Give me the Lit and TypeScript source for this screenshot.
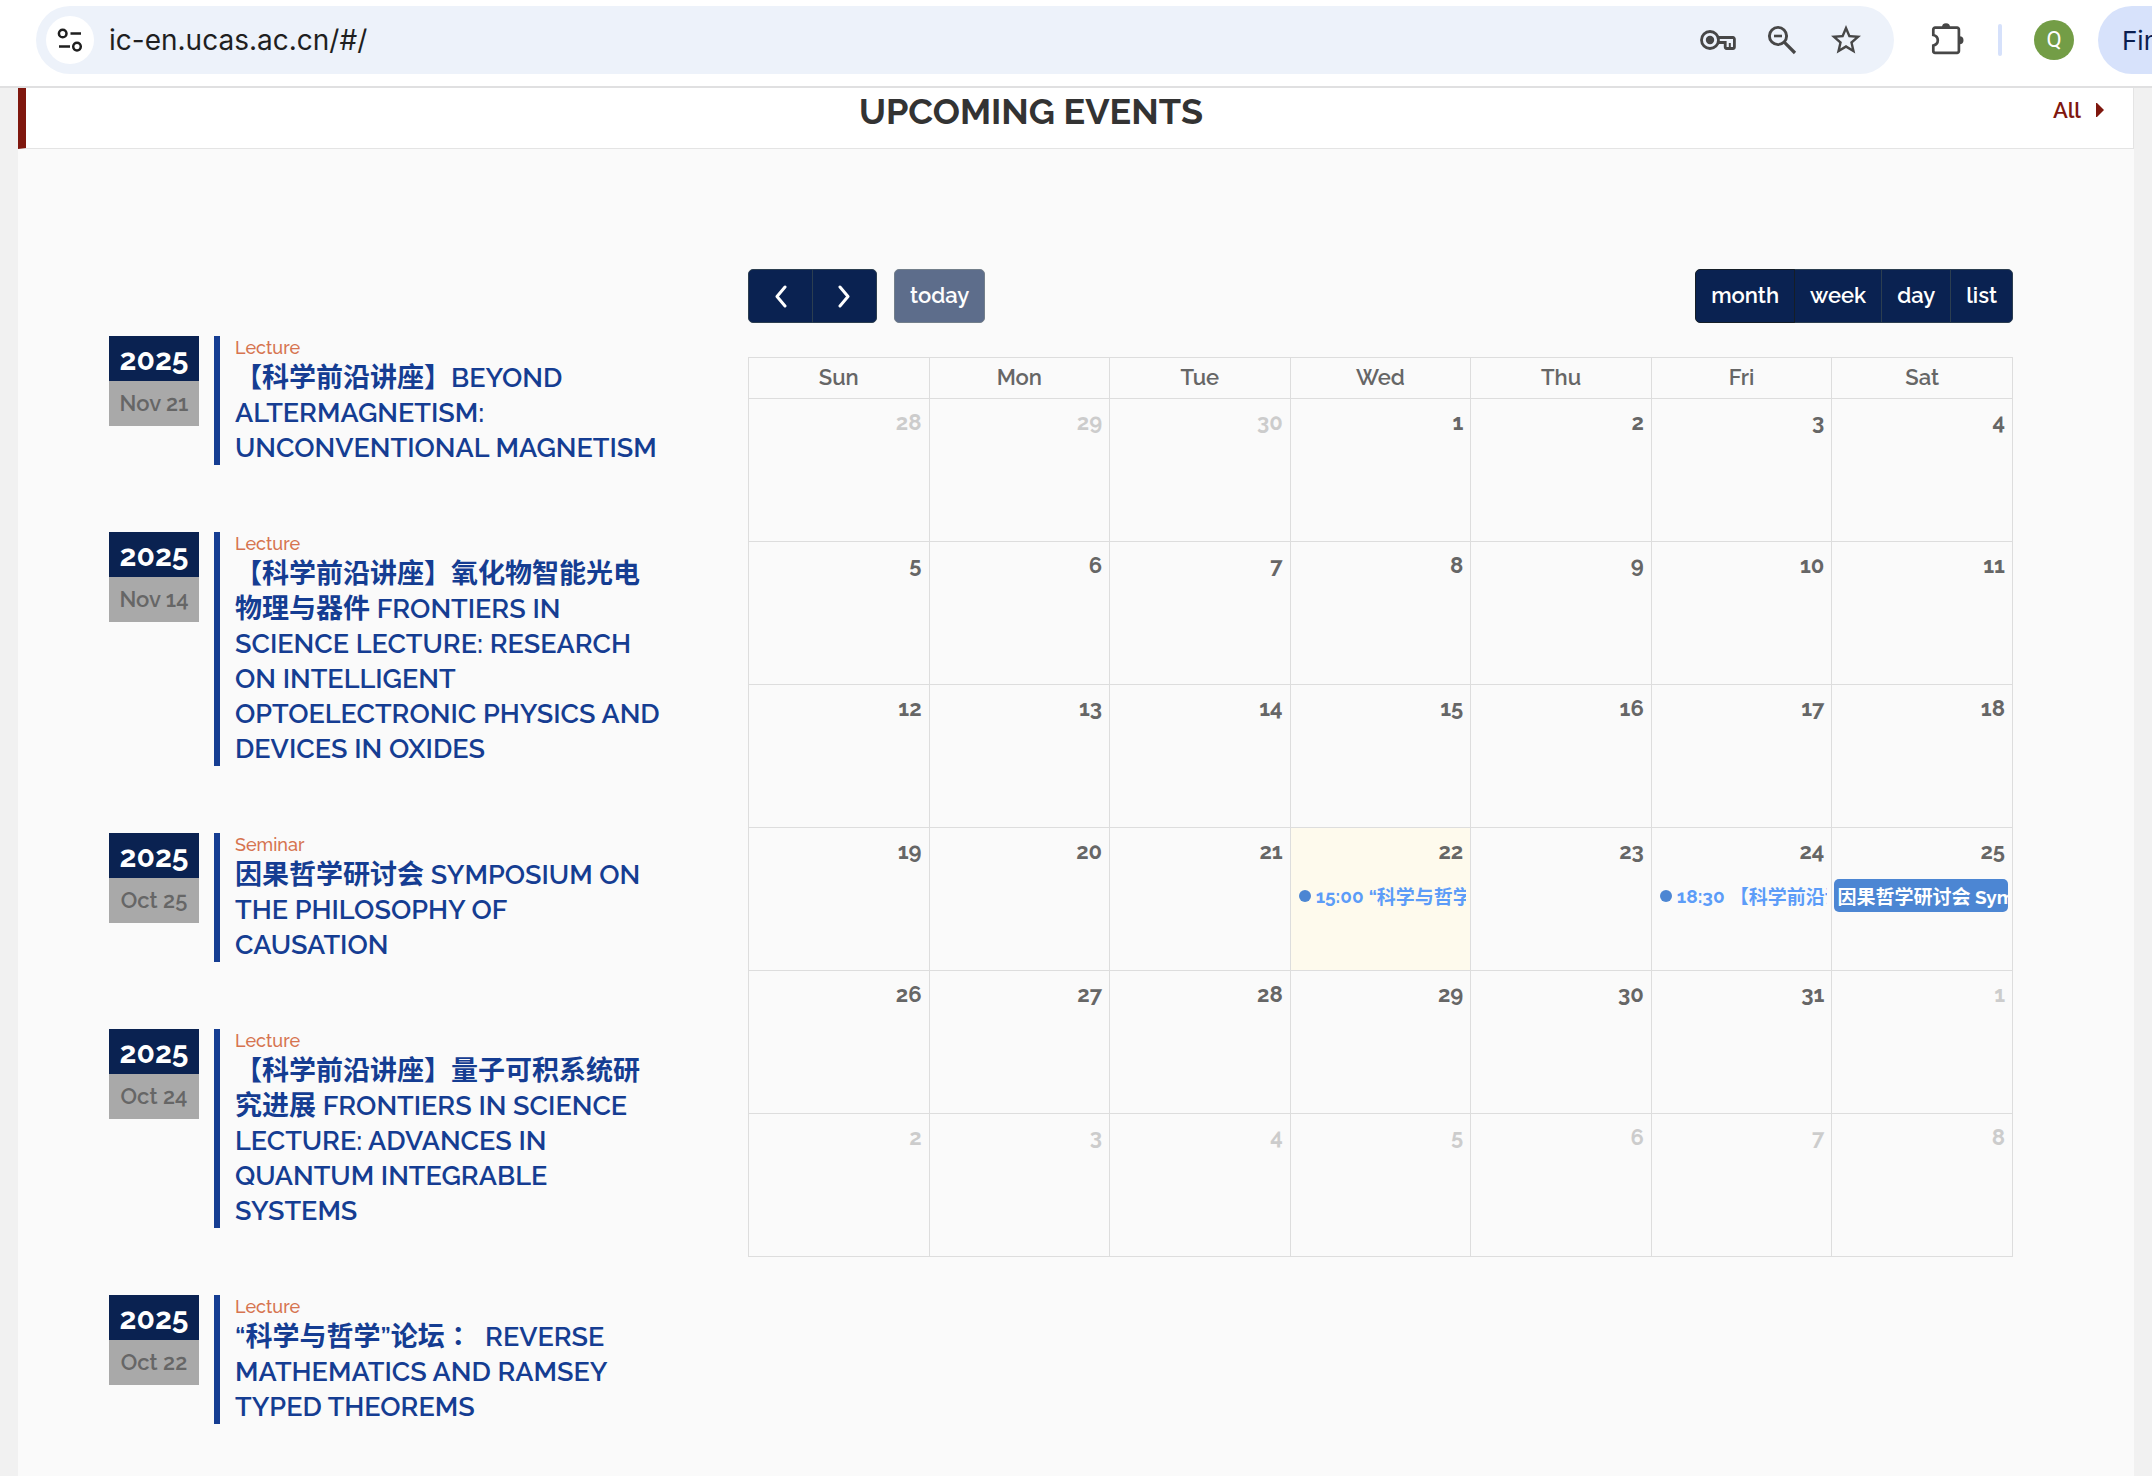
import { LitElement, html, svg, css, nothing } from "lit";
import { customElement } from "lit/decorators.js";
import { classMap } from "lit/directives/class-map.js";

interface EventItem {
  year: string;
  day: string;
  tag: string;
  title: unknown;
}

interface CalendarEvent {
  time?: string;
  title: string;
}

interface Day {
  date: number;
  other: boolean;
  today: boolean;
  event?: CalendarEvent;
}

const EVENTS: EventItem[] = [
  { year: "2025", day: "Nov 21", tag: "Lecture", title: "【科学前沿讲座】BEYOND ALTERMAGNETISM: UNCONVENTIONAL MAGNETISM" },
  {
    year: "2025",
    day: "Nov 14",
    tag: "Lecture",
    title:
      "【科学前沿讲座】氧化物智能光电物理与器件 FRONTIERS IN SCIENCE LECTURE: RESEARCH ON INTELLIGENT OPTOELECTRONIC PHYSICS AND DEVICES IN OXIDES",
  },
  { year: "2025", day: "Oct 25", tag: "Seminar", title: "因果哲学研讨会 SYMPOSIUM ON THE PHILOSOPHY OF CAUSATION" },
  {
    year: "2025",
    day: "Oct 24",
    tag: "Lecture",
    title: "【科学前沿讲座】量子可积系统研究进展 FRONTIERS IN SCIENCE LECTURE: ADVANCES IN QUANTUM INTEGRABLE SYSTEMS",
  },
  {
    year: "2025",
    day: "Oct 22",
    tag: "Lecture",
    title: html`“科学与哲学”论坛<span class="colon">：</span> &nbsp;REVERSE MATHEMATICS AND RAMSEY TYPED THEOREMS`,
  },
];

const CALENDAR_EVENTS: Record<number, CalendarEvent> = {
  22: { time: "15:00", title: "“科学与哲学”论坛" },
  24: { time: "18:30", title: "【科学前沿讲座】" },
  25: { title: "因果哲学研讨会 Symposium" },
};

const WEEKDAYS = ["Sun", "Mon", "Tue", "Wed", "Thu", "Fri", "Sat"];
const TODAY = 22;

/** Six weeks around October 2025, which starts on a Wednesday. */
function buildWeeks(): Day[][] {
  const start = Date.UTC(2025, 8, 28);
  return Array.from({ length: 6 }, (_, week) =>
    Array.from({ length: 7 }, (_, weekday) => {
      const d = new Date(start + (week * 7 + weekday) * 86400000);
      const other = d.getUTCMonth() !== 9;
      const date = d.getUTCDate();
      return { date, other, today: !other && date === TODAY, event: other ? undefined : CALENDAR_EVENTS[date] };
    })
  );
}

@customElement("browser-bar")
export class BrowserBar extends LitElement {
  static styles = css`
    :host {
      display: flex;
      align-items: center;
      box-sizing: border-box;
      height: 88px;
      padding: 6px 0 12px 36px;
      border-bottom: 2px solid #e0e0e1;
      background: #fff;
      overflow: hidden;
      font-family: Inter, "Liberation Sans", sans-serif;
    }
    button {
      display: flex;
      align-items: center;
      justify-content: center;
      flex: none;
      padding: 0;
      border: 0;
      background: none;
      color: #474747;
      font: inherit;
    }
    svg {
      display: block;
    }
    .pill {
      display: flex;
      align-items: center;
      flex: 1;
      min-width: 0;
      height: 68px;
      padding: 0 30px 0 10px;
      box-sizing: border-box;
      border-radius: 34px;
      background: #edf2fa;
    }
    .site {
      width: 48px;
      height: 48px;
      border-radius: 50%;
      background: #fff;
      color: #1f1f1f;
    }
    .address {
      flex: 1;
      min-width: 0;
      height: 48px;
      margin-left: 15px;
      padding: 0;
      border: 0;
      outline: 0;
      background: none;
      color: #1f1f1f;
      font: 400 28px/48px Inter, "Liberation Sans", sans-serif;
    }
    .tools {
      display: flex;
      gap: 28px;
    }
    .puzzle {
      margin-left: 34px;
    }
    .separator {
      flex: none;
      width: 4px;
      height: 32px;
      margin: 0 32px 0 30px;
      border-radius: 2px;
      background: #d6e1fb;
    }
    .avatar {
      width: 40px;
      height: 40px;
      border-radius: 50%;
      background: #739d46;
      color: #fff;
      font: 400 22px/40px Roboto, sans-serif;
    }
    .update {
      justify-content: flex-start;
      width: 54px;
      height: 68px;
      margin-left: 24px;
      padding-left: 24px;
      border-radius: 34px 0 0 34px;
      background: #d7e2fb;
      color: #0a1d4f;
      font-size: 26px;
      overflow: hidden;
    }
  `;

  render() {
    return html`
      <div class="pill">
        <button class="site" aria-label="Site information">
          <svg width="28" height="28" viewBox="0 0 28 28" fill="none" stroke="currentColor" stroke-width="2.5">
            <circle cx="6.7" cy="7.5" r="3.8" />
            <path d="M14.5 7.5H25M3 20.6h11" />
            <circle cx="21" cy="20.6" r="3.8" />
          </svg>
        </button>
        <input class="address" aria-label="Address" value="ic-en.ucas.ac.cn/#/" />
        <div class="tools">
          <button aria-label="Passwords">
            <svg width="36" height="36" viewBox="0 0 36 36" fill="none" stroke="currentColor" stroke-width="2.8">
              <circle cx="10" cy="18" r="8.5" />
              <circle cx="10" cy="18" r="4.2" fill="currentColor" stroke="none" />
              <path d="M18 15.5h15a1.4 1.4 0 0 1 1.4 1.4v8.2a1.4 1.4 0 0 1-1.4 1.4h-6.4a1.4 1.4 0 0 1-1.4-1.4V20.5H18" />
              <path d="M29.8 21v5" stroke-width="2" />
            </svg>
          </button>
          <button aria-label="Zoom">
            <svg width="36" height="36" viewBox="0 0 36 36" fill="none" stroke="currentColor" stroke-width="2.9">
              <circle cx="14" cy="14" r="8.6" />
              <path d="M20.2 20.2 31 31" stroke-width="3.2" />
              <path d="M10 14h8" stroke-width="2.6" />
            </svg>
          </button>
          <button aria-label="Bookmark">
            <svg width="36" height="36" viewBox="0 0 24 24" fill="currentColor">
              <path
                d="M22 9.24l-7.19-.62L12 2 9.19 8.63 2 9.24l5.46 4.73L5.82 21 12 17.27 18.18 21l-1.63-7.03L22 9.24zM12 15.4l-3.76 2.27 1-4.28-3.32-2.88 4.38-.38L12 6.1l1.71 4.04 4.38.38-3.32 2.88 1 4.28L12 15.4z"
              />
            </svg>
          </button>
        </div>
      </div>
      <button class="puzzle" aria-label="Extensions">
        <svg width="40" height="40" viewBox="0 0 40 40">
          <path
            d="M7.1 7.7h22a1.8 1.8 0 0 1 1.8 1.8v21.6a1.8 1.8 0 0 1-1.8 1.8H7.1a1.8 1.8 0 0 1-1.8-1.8V25.500c6-1.500 6-9 0-10.500v-5.500a1.800 1.800 0 0 1 1.800-1.800z"
            fill="none"
            stroke="#474747"
            stroke-width="2.700"
          />
          <path d="M14 7.200a4 4 0 0 1 8 0zM31.500 16.200a4 4 0 0 1 0 8z" fill="#474747" />
        </svg>
      </button>
      <span class="separator"></span>
      <button class="avatar" aria-label="Profile">Q</button>
      <button class="update">Fin</button>
    `;
  }
}

@customElement("event-list")
export class EventList extends LitElement {
  static styles = css`
    :host {
      display: flex;
      flex-direction: column;
      gap: 67px;
    }
    .item {
      display: flex;
      align-items: flex-start;
      gap: 15px;
    }
    .date {
      display: flex;
      flex-direction: column;
      flex: none;
      width: 90px;
      text-align: center;
    }
    .year,
    .day {
      height: 45px;
      line-height: 45px;
    }
    .year {
      background: #0a2251;
      color: #fff;
      font-size: 30px;
      font-weight: 700;
      line-height: 47px;
    }
    .day {
      background: #a9a9a9;
      color: #666;
      font-size: 22px;
      font-weight: 600;
    }
    .body {
      flex: 1;
      min-width: 0;
      padding-left: 15px;
      border-left: 6px solid #153d92;
    }
    .tag {
      display: block;
      color: #d67450;
      font-size: 18px;
      font-weight: 500;
      line-height: 24px;
    }
    .title {
      display: block;
      color: #153d92;
      font-size: 27px;
      font-weight: 600;
      line-height: 35px;
      text-decoration: none;
    }
    .colon {
      font-family: "Noto Sans CJK TC", sans-serif;
      line-height: 1;
    }
  `;

  render() {
    return EVENTS.map(
      (e) => html`
        <article class="item">
          <time class="date"><span class="year">${e.year}</span><span class="day">${e.day}</span></time>
          <div class="body">
            <span class="tag">${e.tag}</span>
            <a class="title" href="#/">${e.title}</a>
          </div>
        </article>
      `
    );
  }
}

@customElement("month-calendar")
export class MonthCalendar extends LitElement {
  static styles = css`
    :host {
      display: flex;
      flex-direction: column;
      gap: 34px;
      min-width: 0;
    }
    .toolbar,
    .side,
    .group {
      display: flex;
    }
    .toolbar {
      justify-content: space-between;
    }
    .side {
      gap: 17px;
    }
    button {
      display: flex;
      align-items: center;
      justify-content: center;
      height: 54px;
      padding: 0 15px 2px;
      border: 1px solid #2c3e50;
      border-radius: 5px;
      background: #0a2251;
      color: #fff;
      font: inherit;
      font-size: 22px;
      font-weight: 600;
    }
    .group button + button {
      margin-left: -1px;
      border-top-left-radius: 0;
      border-bottom-left-radius: 0;
    }
    .group button:not(:last-child) {
      border-top-right-radius: 0;
      border-bottom-right-radius: 0;
    }
    .group .active {
      position: relative;
      border-color: #151e27;
    }
    .group .arrow {
      width: 65px;
      padding: 0;
    }
    .today-button:disabled {
      opacity: 0.65;
    }
    table {
      width: 100%;
      border-collapse: collapse;
      table-layout: fixed;
      color: #666;
      font-size: 22px;
    }
    th,
    td {
      box-sizing: border-box;
      padding: 0;
      border: 1px solid #ddd;
    }
    th {
      height: 41px;
      padding-bottom: 2px;
      font-weight: 600;
      line-height: 38px;
    }
    td {
      height: 143px;
      vertical-align: top;
    }
    .number {
      display: block;
      padding: 9px 7px 1px 0;
      font-weight: 700;
      line-height: 28px;
      text-align: right;
    }
    .other .number {
      opacity: 0.3;
    }
    .today {
      background: #fefaed;
    }
    .event {
      display: flex;
      align-items: center;
      height: 33px;
      margin: 13px 4px 0 2px;
      border-radius: 5px;
      overflow: hidden;
      font-size: 19px;
      font-weight: 700;
      white-space: nowrap;
      text-decoration: none;
    }
    .block {
      padding-left: 3px;
      background: #4c86d3;
      color: #fff;
    }
    .timed {
      gap: 5px;
      padding-left: 6px;
      color: #5c9cf8;
    }
    .dot {
      flex: none;
      width: 12px;
      height: 12px;
      border-radius: 50%;
      background: #4c86d3;
    }
  `;

  private chevron(d: string) {
    return html`<svg width="24" height="24" viewBox="0 0 24 24" aria-hidden="true">
      ${svg`<path d=${d} fill="none" stroke="#fff" stroke-width="3" stroke-linecap="round" stroke-linejoin="round" />`}
    </svg>`;
  }

  private event(e: CalendarEvent) {
    return e.time
      ? html`<a class="event timed" href="#/"><span class="dot"></span><span>${e.time}</span><span>${e.title}</span></a>`
      : html`<a class="event block" href="#/">${e.title}</a>`;
  }

  render() {
    return html`
      <div class="toolbar">
        <div class="side">
          <div class="group">
            <button class="arrow" aria-label="Previous month">${this.chevron("M16 3 8 12.500 16 22")}</button>
            <button class="arrow" aria-label="Next month">${this.chevron("M7 3l8 9.500L7 22")}</button>
          </div>
          <button class="today-button" disabled>today</button>
        </div>
        <div class="group">
          <button class="active">month</button>
          <button>week</button>
          <button>day</button>
          <button>list</button>
        </div>
      </div>
      <table>
        <thead>
          <tr>
            ${WEEKDAYS.map((d) => html`<th scope="col">${d}</th>`)}
          </tr>
        </thead>
        <tbody>
          ${buildWeeks().map(
            (week) => html`<tr>
              ${week.map(
                (d) => html`<td class=${classMap({ other: d.other, today: d.today })}>
                  <span class="number">${d.date}</span>${d.event ? this.event(d.event) : nothing}
                </td>`
              )}
            </tr>`
          )}
        </tbody>
      </table>
    `;
  }
}

@customElement("app-root")
export class AppRoot extends LitElement {
  static styles = css`
    :host {
      display: flex;
      flex-direction: column;
      min-height: 100vh;
      background: #f1f1f1;
      font-family: Raleway, "Noto Sans CJK SC", sans-serif;
    }
    .page {
      flex: 1;
      margin: 0 18px;
      background: #fafafa;
    }
    .heading {
      display: flex;
      padding-bottom: 14px;
      border-right: 1px solid #e4e4e4;
      border-bottom: 1px solid #e4e4e4;
      border-left: 8px solid #7f170e;
      background: #fff;
      line-height: 46px;
    }
    h2 {
      flex: 1;
      margin: 0;
      color: #333;
      font-size: 36px;
      font-weight: 700;
      text-align: center;
    }
    .all {
      display: flex;
      align-items: center;
      gap: 15px;
      padding: 0 29px 2px 17px;
      color: #7f170e;
      font-size: 22px;
      font-weight: 600;
      line-height: 44px;
      text-decoration: none;
    }
    .content {
      display: grid;
      grid-template-columns: 554fr 1265fr;
      align-items: start;
      gap: 85px;
      padding: 120px 121px 48px 91px;
    }
    event-list {
      margin-top: 67px;
    }
  `;

  render() {
    return html`
      <browser-bar></browser-bar>
      <main class="page">
        <header class="heading">
          <h2>UPCOMING EVENTS</h2>
          <a class="all" href="#/">
            All
            <svg width="8" height="14" viewBox="0 0 8 14" fill="currentColor" aria-hidden="true"><path d="M0 0h1l7 7-7 7H0z" /></svg>
          </a>
        </header>
        <div class="content">
          <event-list></event-list>
          <month-calendar></month-calendar>
        </div>
      </main>
    `;
  }
}
